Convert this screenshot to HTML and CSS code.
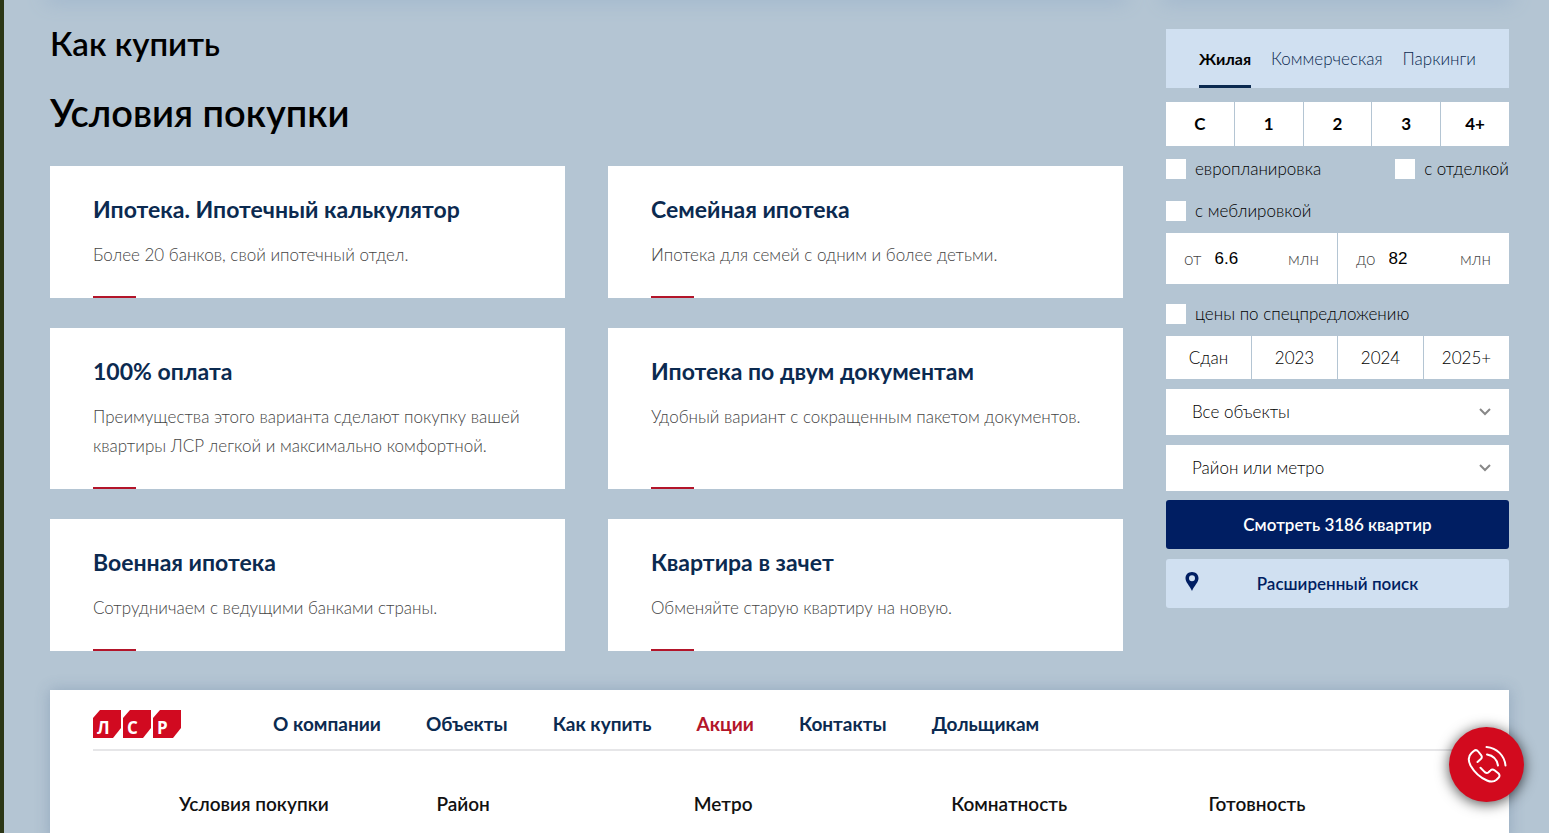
FILE: index.html
```html
<!DOCTYPE html>
<html lang="ru">
<head>
<meta charset="utf-8">
<meta name="viewport" content="width=device-width, initial-scale=1">
<title>Условия покупки</title>
<link rel="stylesheet" href="styles.css">
</head>
<body>
<div class="page">
  <div class="layout" aria-hidden="true">
    <div class="shadow-edge"></div>
    <div class="shadow-edge"></div>
  </div>
  <div class="layout">
    <main class="content">
      <h2 class="section-title">Как купить</h2>
      <h1 class="page-title">Условия покупки</h1>
      <div class="cards">
        <article class="card"><h3 class="card-title">Ипотека. Ипотечный калькулятор</h3><p class="card-text">Более 20 банков, свой ипотечный отдел.</p></article>
        <article class="card"><h3 class="card-title">Семейная ипотека</h3><p class="card-text">Ипотека для семей с одним и более детьми.</p></article>
        <article class="card"><h3 class="card-title">100% оплата</h3><p class="card-text">Преимущества этого варианта сделают покупку вашей квартиры ЛСР легкой и максимально комфортной.</p></article>
        <article class="card"><h3 class="card-title">Ипотека по двум документам</h3><p class="card-text">Удобный вариант с сокращенным пакетом документов.</p></article>
        <article class="card"><h3 class="card-title">Военная ипотека</h3><p class="card-text">Сотрудничаем с ведущими банками страны.</p></article>
        <article class="card"><h3 class="card-title">Квартира в зачет</h3><p class="card-text">Обменяйте старую квартиру на новую.</p></article>
      </div>
    </main>
    <form class="search">
      <div class="tabs">
        <button type="button" class="tab tab-active">Жилая</button>
        <button type="button" class="tab">Коммерческая</button>
        <button type="button" class="tab">Паркинги</button>
      </div>
      <div class="segments rooms">
        <button type="button" class="segment">С</button>
        <button type="button" class="segment">1</button>
        <button type="button" class="segment">2</button>
        <button type="button" class="segment">3</button>
        <button type="button" class="segment">4+</button>
      </div>
      <div class="checks">
        <label class="check"><input type="checkbox" class="box">европланировка</label>
        <label class="check"><input type="checkbox" class="box">с отделкой</label>
        <label class="check"><input type="checkbox" class="box">с меблировкой</label>
      </div>
      <div class="prices">
        <label class="price"><span>от</span><input class="price-input" type="text" value="6.6" aria-label="Цена от, млн"><span>млн</span></label>
        <label class="price"><span>до</span><input class="price-input" type="text" value="82" aria-label="Цена до, млн"><span>млн</span></label>
      </div>
      <label class="check check-special"><input type="checkbox" class="box">цены по спецпредложению</label>
      <div class="segments years">
        <button type="button" class="segment">Сдан</button>
        <button type="button" class="segment">2023</button>
        <button type="button" class="segment">2024</button>
        <button type="button" class="segment">2025+</button>
      </div>
      <div class="selects">
        <div class="select-wrap">
          <select class="select" aria-label="Объект"><option>Все объекты</option></select>
          <svg class="chevron" viewBox="0 0 12 8"><path d="M1 1l5 5 5-5"/></svg>
        </div>
        <div class="select-wrap">
          <select class="select" aria-label="Район или метро"><option>Район или метро</option></select>
          <svg class="chevron" viewBox="0 0 12 8"><path d="M1 1l5 5 5-5"/></svg>
        </div>
      </div>
      <button type="submit" class="action action-primary">Смотреть 3186 квартир</button>
      <button type="button" class="action action-light">
        <svg class="pin" viewBox="0 0 14 20"><path fill-rule="evenodd" d="M7 0C3 0 .5 2.800.5 6.300c0 4.200 4.200 7.200 6.500 12.700 2.300-5.500 6.500-8.500 6.500-12.700C13.500 2.800 11 0 7 0zm0 3.300a3 3 0 1 1 0 6 3 3 0 0 1 0-6z"/></svg>
        Расширенный поиск
      </button>
    </form>
  </div>
  <footer class="footer">
    <div class="footer-top">
      <a class="logo" href="#" aria-label="ЛСР">
        <svg class="logo-art" viewBox="0 0 88 28">
          <path class="tile" d="M7 0H28V18L20 28H0V8z"/>
          <path class="tile" d="M37 0H58V18L50 28H30V8z"/>
          <path class="tile" d="M67 0H88V18L80 28H60V8z"/>
          <text class="logo-letter" x="4" y="24">Л</text>
          <text class="logo-letter" x="34" y="24">С</text>
          <text class="logo-letter" x="64" y="24">Р</text>
        </svg>
      </a>
      <nav class="nav">
        <a class="nav-link" href="#">О компании</a>
        <a class="nav-link" href="#">Объекты</a>
        <a class="nav-link" href="#">Как купить</a>
        <a class="nav-link nav-link-active" href="#">Акции</a>
        <a class="nav-link" href="#">Контакты</a>
        <a class="nav-link" href="#">Дольщикам</a>
      </nav>
    </div>
    <div class="footer-columns">
      <a class="column-title" href="#">Условия покупки</a>
      <a class="column-title" href="#">Район</a>
      <a class="column-title" href="#">Метро</a>
      <a class="column-title" href="#">Комнатность</a>
      <a class="column-title" href="#">Готовность</a>
    </div>
  </footer>
</div>
<button type="button" class="call" aria-label="Позвонить">
  <svg class="call-icon" viewBox="0 0 40 40">
    <path d="M10.500 17l3.300-3c1.200-1.200 1.300-2.500.3-3.800L11.200 6.500C10 5 8.300 4.800 6.800 6L4.500 8C1.300 11 1 15.500 3.500 20.500c4 7 9.500 12 16.500 15 4 1.700 7 1.500 9.500-.7l2-2c1.400-1.400 1.300-3.200-.2-4.500l-3.800-3c-1.500-1.200-2.800-1.100-4 .1l-2.200 2c-1.100.9-2.200.7-3.500-.3l-4.300-4.300"/>
    <path d="M19.500 2C30 3 37.500 10.500 38.500 20.500"/>
    <path d="M20 9.500C26 10.500 30 14.500 31 20.500"/>
  </svg>
</button>
</body>
</html>
```
FILE: styles.css
```css
* {
  box-sizing: border-box;
}

body {
  margin: 0;
  background: #b4c5d3;
  color: #000;
  font: 300 17px/20px Lato, "Open Sans", sans-serif;
}

button,
select {
  font: inherit;
  color: inherit;
  border: 0;
  cursor: pointer;
}

a {
  text-decoration: none;
}

.page {
  min-height: 100vh;
  padding: 0 40px 0 46px;
  border-left: 4px solid #2b3716;
  overflow: hidden;
}

.layout {
  display: grid;
  grid-template-columns: minmax(0, 1fr) 343px;
  column-gap: 43px;
}

.shadow-edge {
  box-shadow: 0 -4px 20px 4px #91abc8;
}

.content {
  padding-top: 19px;
}

.section-title,
.page-title {
  margin: 0;
  font-weight: 600;
}

.section-title {
  font-size: 33px;
  line-height: 48px;
}

.page-title {
  margin: 18px 0 27px;
  font-size: 38px;
  line-height: 54px;
}

.cards {
  display: grid;
  grid-template-columns: 1fr 1fr;
  gap: 30px 43px;
}

.card {
  position: relative;
  padding: 27px 36px 29px 43px;
  background: #fff;
}

.card::after {
  content: "";
  position: absolute;
  left: 43px;
  bottom: 0;
  width: 43px;
  height: 2px;
  background: #b3152a;
}

.card-title {
  margin: 0 0 15px;
  color: #0b2a50;
  font-size: 23px;
  font-weight: 700;
  line-height: 32px;
}

.card-text {
  margin: 0;
  color: #444;
  line-height: 29px;
}

.search {
  display: flex;
  flex-direction: column;
  padding-top: 29px;
}

.tabs {
  display: flex;
  justify-content: space-between;
  height: 59px;
  padding: 0 33px;
  background: #d0e0f1;
}

.tab {
  padding: 0;
  border-top: 3px solid transparent;
  border-bottom: 3px solid transparent;
  background: none;
  color: #0b2a50;
}

.tab-active {
  border-bottom-color: #0b2a50;
  color: #000;
  font-size: 16px;
  font-weight: 700;
}

.segments {
  display: grid;
  grid-auto-flow: column;
  grid-auto-columns: 1fr;
  gap: 1px;
}

.segment {
  padding: 0;
  background: #fff;
}

.rooms {
  height: 44px;
  margin: 14px 0 13px;
  font-size: 17px;
  font-weight: 700;
}

.years {
  height: 43px;
  margin-bottom: 10px;
}

.checks {
  display: flex;
  flex-wrap: wrap;
  justify-content: space-between;
  row-gap: 22px;
}

.check {
  display: flex;
  align-items: center;
  gap: 9px;
}

.box {
  appearance: none;
  width: 20px;
  height: 20px;
  margin: 0;
  background: #fff;
}

.box:checked {
  background: #001e62;
}

.prices {
  display: grid;
  grid-template-columns: 1fr 1fr;
  gap: 1px;
  margin: 12px 0 20px;
}

.price {
  display: flex;
  align-items: center;
  gap: 13px;
  height: 51px;
  padding: 0 18px;
  background: #fff;
  color: #444;
}

.price-input {
  flex: 1;
  width: 0;
  padding: 0;
  border: 0;
  font: 17px/20px "Liberation Sans", Arial, sans-serif;
}

.check-special {
  margin-bottom: 12px;
}

.selects {
  display: grid;
  gap: 10px;
  margin-bottom: 9px;
}

.select-wrap {
  position: relative;
}

.select {
  display: block;
  appearance: none;
  width: 100%;
  height: 46px;
  padding: 0 44px 0 26px;
  border-radius: 0;
  background: #fff;
}

.chevron {
  position: absolute;
  top: 19px;
  right: 18px;
  width: 12px;
  height: 8px;
  fill: none;
  stroke: #888;
  stroke-width: 2;
  pointer-events: none;
}

.action {
  position: relative;
  height: 49px;
  border-radius: 3px;
  font-weight: 600;
}

.action-primary {
  margin-bottom: 10px;
  background: #001e62;
  color: #fff;
}

.action-light {
  background: #d0e0f1;
  color: #001e62;
}

.pin {
  position: absolute;
  left: 19px;
  top: 13px;
  width: 14px;
  height: 20px;
  fill: #001e62;
}

.footer {
  margin-top: 39px;
  padding: 0 43px 24px;
  background: #fff;
  box-shadow: 0 0 14px rgba(70, 100, 140, 0.3);
}

.footer-top {
  display: flex;
  align-items: center;
  gap: 92px;
  height: 61px;
  padding-top: 8px;
  border-bottom: 2px solid #e6e6e8;
}

.logo,
.logo-art {
  display: block;
  width: 88px;
  height: 28px;
}

.tile {
  fill: #d10a20;
}

.logo-letter {
  fill: #fff;
  font: 700 17px "Open Sans", sans-serif;
}

.nav {
  display: flex;
  gap: 45px;
}

.nav-link {
  color: #0b2a50;
  font-size: 19px;
  font-weight: 700;
  line-height: 24px;
}

.nav-link-active {
  color: #b3152a;
}

.footer-columns {
  display: grid;
  grid-template-columns: repeat(5, 1fr);
  padding: 41px 0 0 86px;
}

.column-title {
  color: #111;
  font-size: 19px;
  font-weight: 600;
  line-height: 24px;
}

.call {
  position: fixed;
  right: 25px;
  bottom: 31px;
  width: 75px;
  height: 75px;
  padding: 0;
  border-radius: 50%;
  background: #d20a1e;
  box-shadow: 0 2px 14px rgba(0, 0, 0, 0.7);
}

.call-icon {
  display: block;
  width: 40px;
  height: 40px;
  margin: 0 auto;
  fill: none;
  stroke: #fff;
  stroke-width: 2;
  stroke-linecap: round;
  stroke-linejoin: round;
}
```
